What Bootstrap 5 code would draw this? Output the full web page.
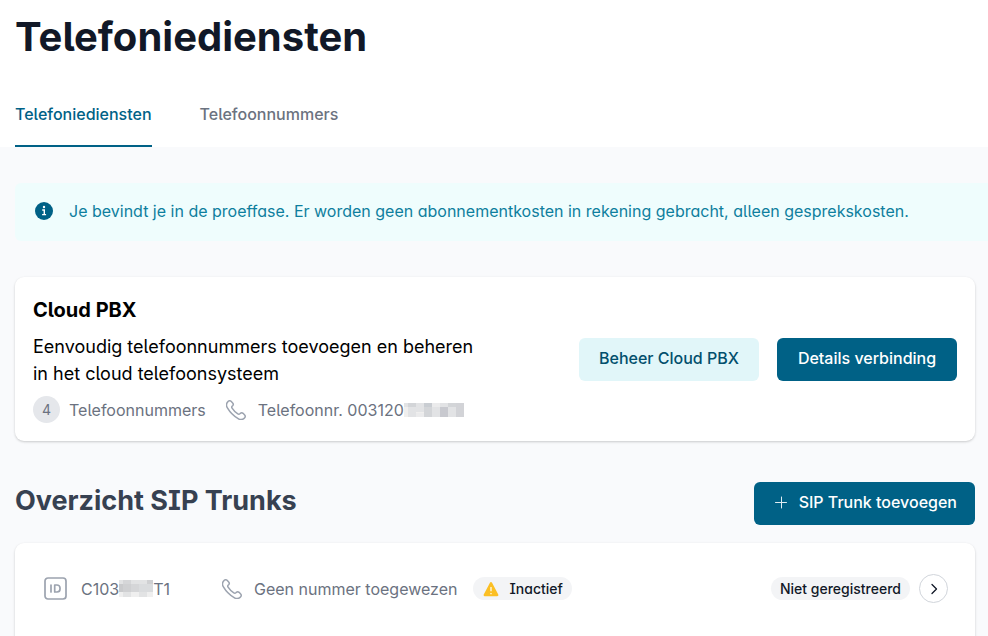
<!DOCTYPE html>
<html lang="nl">
<head>
<meta charset="utf-8">
<meta name="viewport" content="width=device-width, initial-scale=1">
<title>Telefoniediensten</title>
<link href="https://cdn.jsdelivr.net/npm/bootstrap@5.3.0/dist/css/bootstrap.min.css" rel="stylesheet">
<style>
  :root { --teal: #006186; --grey: #6b7280; --ink: #111827; }
  body {
    font-family: Inter, "Liberation Sans", sans-serif;
    font-feature-settings: "cv05", "cv08", "cv11";
    font-size: 16px; line-height: 24px;
    background: #f9fafc; color: #000;
  }
  svg { flex: none; }
  .page-head { background: #fff; padding: 13px 15px 0; }
  .page-title { font-size: 40px; line-height: 48px; font-weight: 700; color: var(--ink); margin: 0 0 37px; }
  .tabs { gap: 48px; }
  .tabs .nav-link { padding: 4px 0 19px; color: var(--grey); font-weight: 500; border-bottom: 2px solid transparent; }
  .tabs .nav-link.active { color: var(--teal); border-bottom-color: var(--teal); }
  .trial-note { margin: 36px 0 0 15px; padding: 16px 20px 18px; background: #effdfd; color: #0e7f9e; border-radius: 6px 0 0 6px; gap: 16px; }
  .content { padding: 36px 13px 0 15px; }
  .panel { background: #fff; border-radius: 9px; box-shadow: 0 1px 3px rgba(0,0,0,.12), 0 1px 2px rgba(0,0,0,.08); }
  .pbx { padding: 18px; }
  .pbx-title { font-size: 20px; line-height: 30px; font-weight: 700; margin: 0 0 8px; }
  .pbx-text { font-size: 18px; line-height: 27px; max-width: 450px; margin: 0 0 9px; }
  .pbx-actions { gap: 18px; }
  .meta { color: var(--grey); }
  .numbers { gap: 20px; }
  .counted { gap: 9px; }
  .labelled { gap: 12px; }
  .count { width: 27px; height: 27px; border-radius: 50%; background: #e5e7eb; font-size: 14px; }
  .btn-teal, .btn-pale { border: 0; border-radius: 6px; font-size: 16px; line-height: 24px; font-weight: 500; min-width: 180px; padding: 8px 18px 11px; }
  .btn-teal, .btn-teal:hover { background: var(--teal); color: #fff; }
  .btn-pale, .btn-pale:hover { background: #e1f6f9; color: #024f6d; }
  .btn-add { gap: 9px; }
  .section-head { padding: 41px 0 18px; }
  .section-title { font-size: 27px; line-height: 38px; font-weight: 700; color: #374151; margin: 0; }
  .trunk { padding: 31px 27px 54px 29px; gap: 16px; }
  .trunk-id { gap: 14px; min-width: 162px; }
  .tag { background: #f3f4f6; color: var(--ink); border-radius: 12px; font-size: 14px; line-height: 23px; font-weight: 500; padding: 0 9px; gap: 9px; }
  .state { gap: 9px; }
  .go { width: 29px; height: 29px; border: 1px solid #d1d5db; border-radius: 50%; background: #fff; padding: 0; }
</style>
<script src="https://cdn.jsdelivr.net/npm/bootstrap@5.3.0/dist/js/bootstrap.bundle.min.js" defer></script>
</head>
<body>
<svg class="d-none" aria-hidden="true">
  <symbol id="phone" viewBox="0 0 24 24"><path fill="none" stroke="#9ca3af" stroke-width="1.8" stroke-linecap="round" stroke-linejoin="round" d="M14.6 22.3a6 6 0 0 0 7.6-.8l.2-.2a2.4 2.4 0 0 0 0-3.4l-1.9-1.9a2.4 2.4 0 0 0-3.3 0l-.5.5a2 2 0 0 1-2.5.2A22 22 0 0 1 7.3 9.8a2 2 0 0 1 .2-2.5l.5-.5a2.4 2.4 0 0 0 0-3.3L6.1 1.6a2.4 2.4 0 0 0-3.4 0l-.2.2a6 6 0 0 0-.8 7.6A36 36 0 0 0 14.6 22.3z"/></symbol>
</svg>
<header class="page-head">
  <h1 class="page-title">Telefoniediensten</h1>
  <nav class="nav tabs" aria-label="Telefonie">
    <a class="nav-link active" aria-current="page" href="#">Telefoniediensten</a>
    <a class="nav-link" href="#nummers">Telefoonnummers</a>
  </nav>
</header>
<main>
  <div class="trial-note d-flex align-items-center" role="status">
    <svg width="18" height="18" viewBox="0 0 18 18" aria-hidden="true"><circle cx="9" cy="9" r="9" fill="#006186"/><circle cx="9" cy="5" r="1.2" fill="#fff"/><path d="M7.2 8h2.1v4.4M7.1 12.6h4" fill="none" stroke="#fff" stroke-width="1.4"/></svg>
    <span>Je bevindt je in de proeffase. Er worden geen abonnementkosten in rekening gebracht, alleen gesprekskosten.</span>
  </div>
  <div class="content">
    <section class="panel pbx d-flex align-items-center justify-content-between">
      <div>
        <h2 class="pbx-title">Cloud PBX</h2>
        <p class="pbx-text">Eenvoudig telefoonnummers toevoegen en beheren in het cloud telefoonsysteem</p>
        <div class="meta numbers d-flex align-items-center">
          <div class="counted d-flex align-items-center">
            <span class="count d-flex align-items-center justify-content-center">4</span>
            <span>Telefoonnummers</span>
          </div>
          <div class="labelled d-flex align-items-center">
            <svg width="20" height="20" aria-hidden="true"><use href="#phone"/></svg>
            <span class="d-flex align-items-center">Telefoonnr. 003120<svg width="60" height="14" viewBox="0 0 60 14" shape-rendering="crispEdges" role="img" aria-label="verborgen cijfers">
              <path fill="#e2e3e5" d="M0 0h60v14H0z"/>
              <path fill="#f0efee" d="M0 4h4v10H0zM12 9h8v5h-8zM36 9h8v5h-8z"/>
              <path fill="#d3d5d8" d="M4 0h8v4H4zM20 4h8v10h-8zM44 0h8v4h-8z"/>
              <path fill="#c9cdd2" d="M20 0h8v4h-8z"/>
              <path fill="#c8c9cf" d="M36 4h8v10h-8z"/>
              <path fill="#d2d3d7" d="M52 0h8v14h-8z"/>
              <path fill="#ebebec" d="M12 10h8v4h-8zM28 0h8v4h-8z"/>
            </svg></span>
          </div>
        </div>
      </div>
      <div class="pbx-actions d-flex">
        <button type="button" class="btn btn-pale">Beheer Cloud PBX</button>
        <button type="button" class="btn btn-teal">Details verbinding</button>
      </div>
    </section>
    <div class="section-head d-flex align-items-start justify-content-between">
      <h2 class="section-title">Overzicht SIP Trunks</h2>
      <button type="button" class="btn btn-teal btn-add d-flex align-items-center">
        <svg width="18" height="18" viewBox="0 0 18 18" aria-hidden="true"><path d="M3.5 9.5h11M9.5 4v11" stroke="#e0edf2" stroke-width="1" fill="none" stroke-linecap="round"/></svg>
        SIP Trunk toevoegen
      </button>
    </div>
    <section class="panel trunk d-flex align-items-center">
      <div class="meta trunk-id d-flex align-items-center">
        <svg width="23" height="23" viewBox="0 0 23 23" fill="none" stroke="#9ca3af" stroke-width="1.7" stroke-linecap="round" stroke-linejoin="round" aria-hidden="true"><rect x="1" y="1" width="21" height="21" rx="3"/><path d="M7 8v7M10.7 8v7h2.3a3 3 0 0 0 3-3v-1a3 3 0 0 0-3-3z"/></svg>
        <span class="d-flex align-items-center">C103<svg width="34" height="17" viewBox="0 0 34 17" shape-rendering="crispEdges" role="img" aria-label="verborgen cijfers">
          <path fill="#e2e3e4" d="M0 0h34v17H0z"/>
          <path fill="#d5d6d8" d="M4 0h8v4H4zM12 4h16v8H12z"/>
          <path fill="#c9cacc" d="M0 4h4v8H0z"/>
          <path fill="#cfd0d2" d="M4 4h8v8H4zM28 0h6v4h-6z"/>
          <path fill="#dadcde" d="M20 4h8v8h-8zM28 4h6v8h-6z"/>
          <path fill="#efefef" d="M0 12h4v5H0zM12 12h8v5h-8zM28 12h6v5h-6z"/>
        </svg>T1</span>
      </div>
      <div class="meta labelled d-flex align-items-center">
        <svg width="20" height="20" aria-hidden="true"><use href="#phone"/></svg>
        <span>Geen nummer toegewezen</span>
      </div>
      <span class="tag d-flex align-items-center">
        <svg width="18" height="18" viewBox="0 0 18 18" aria-hidden="true"><path d="M9 3.2 15.2 15H2.8z" fill="#fbbf24" stroke="#fbbf24" stroke-width="2.4" stroke-linejoin="round"/><path d="M9 7v4.2M9 13v1.3" stroke="#fff" stroke-width="1.2"/></svg>
        Inactief
      </span>
      <div class="state d-flex align-items-center ms-auto">
        <span class="tag">Niet geregistreerd</span>
        <button type="button" class="go d-flex align-items-center justify-content-center" aria-label="Open trunk">
          <svg width="12" height="12" viewBox="0 0 12 12" aria-hidden="true"><path d="M4 1.5 8.5 6 4 10.5" fill="none" stroke="#111827" stroke-width="1.3" stroke-linecap="round" stroke-linejoin="round"/></svg>
        </button>
      </div>
    </section>
  </div>
</main>
</body>
</html>
